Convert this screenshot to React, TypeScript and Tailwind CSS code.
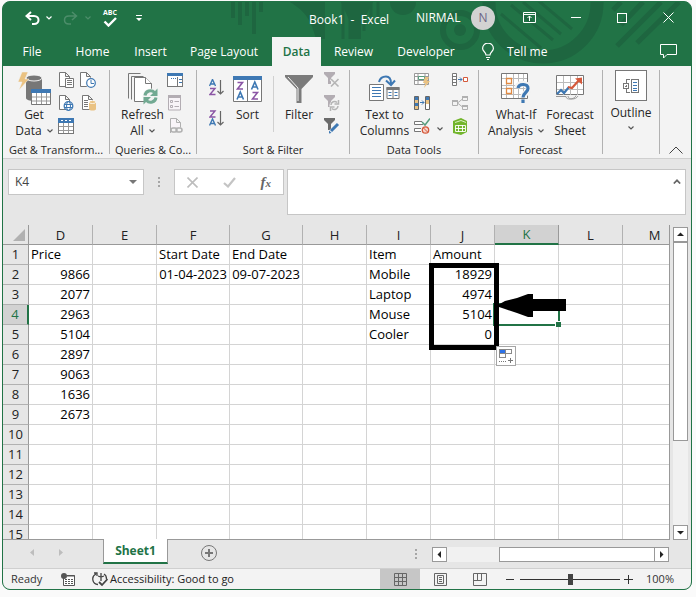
import React from "react";

type Row = Record<string, string>;

const columns = [
  { name: "D", width: "w-[64px]" },
  { name: "E", width: "w-[64px]" },
  { name: "F", width: "w-[73px]" },
  { name: "G", width: "w-[73px]" },
  { name: "H", width: "w-[64px]" },
  { name: "I", width: "w-[64px]" },
  { name: "J", width: "w-[64px]" },
  { name: "K", width: "w-[64px]" },
  { name: "L", width: "w-[64px]" },
  { name: "M", width: "w-auto" },
];

const rows: Row[] = [
  { D: "Price", F: "Start Date", G: "End Date", I: "Item", J: "Amount" },
  { D: "9866", F: "01-04-2023", G: "09-07-2023", I: "Mobile", J: "18929" },
  { D: "2077", I: "Laptop", J: "4974" },
  { D: "2963", I: "Mouse", J: "5104" },
  { D: "5104", I: "Cooler", J: "0" },
  { D: "2897" },
  { D: "9063" },
  { D: "1636" },
  { D: "2673" },
  {},
  {},
  {},
  {},
  {},
  {},
];

const tabs = [
  { name: "File", width: "w-[56px]" },
  { name: "Home", width: "w-[65px]" },
  { name: "Insert", width: "w-[51px]" },
  { name: "Page Layout", width: "w-[96px]" },
  { name: "Data", width: "w-[49px]" },
  { name: "Review", width: "w-[65px]" },
  { name: "Developer", width: "w-[80px]" },
];

const Chevron = ({ className = "" }: { className?: string }) => (
  <svg width="6" height="4" viewBox="0 0 6 4" fill="none" stroke="currentColor" className={className}>
    <path d="M.5 .5 3 3 5.5 .5" strokeWidth="1.2" />
  </svg>
);

const Dots = () => (
  <svg width="2" height="10" viewBox="0 0 2 10" fill="#a6a6a6" shapeRendering="crispEdges">
    <path d="M0 0h2v2H0zM0 4h2v2H0zM0 8h2v2H0z" />
  </svg>
);

/* Ribbon icons */

const GetDataIcon = () => (
  <svg width="34" height="34" viewBox="0 0 34 34">
    <path d="M9 6v20c0 2 4 3 8 3s8-1 8-3V6z" fill="#777" />
    <ellipse cx="17" cy="6" rx="8" ry="3" fill="#777" stroke="#f3f3f3" />
    <path d="M5 0h6L8 7h4L2 18l3-8H1z" fill="#eac282" stroke="#f3f3f3" strokeWidth=".5" />
    <path d="M14.500 17.500h19v15h-19z" fill="#fff" stroke="#777" />
    <path d="M14 17h20v4H14z" fill="#3e78b3" />
    <path d="M15 25h18M15 29h18M19.500 21v11M24.500 21v11M29.500 21v11" stroke="#999" fill="none" />
  </svg>
);

const Page = () => <path d="M.5 .5h6l4 4v10H.5z M6.500 .5v4h4" fill="#fff" stroke="#777" />;

const TextFileIcon = () => (
  <svg width="16" height="16" viewBox="0 0 16 16">
    <g transform="translate(1 0)"><Page /></g>
    <path d="M7.500 6.500h8v9h-8z" fill="#fff" stroke="#777" />
    <path d="M9 8.500h5M9 10.500h5M9 12.500h5" stroke="#777" />
  </svg>
);

const RecentIcon = () => (
  <svg width="16" height="16" viewBox="0 0 16 16">
    <Page />
    <circle cx="11" cy="11" r="5.500" fill="#f3f3f3" />
    <circle cx="11" cy="11" r="4.300" fill="#fff" stroke="#3e78b3" strokeWidth="1.200" />
    <path d="M11 8v3.500h3" fill="none" stroke="#3e78b3" />
  </svg>
);

const WebIcon = () => (
  <svg width="16" height="16" viewBox="0 0 16 16">
    <g transform="translate(1 0)"><Page /></g>
    <circle cx="10.500" cy="11" r="4.300" fill="#fff" stroke="#3e78b3" strokeWidth="1.300" />
    <ellipse cx="10.500" cy="11" rx="2" ry="4.500" fill="none" stroke="#3e78b3" />
    <path d="M6 9.500h9M6 12.500h9" stroke="#3e78b3" />
  </svg>
);

const ConnectionsIcon = () => (
  <svg width="16" height="16" viewBox="0 0 16 16">
    <g transform="translate(2 0)"><Page /></g>
    <path d="M4 5.500h4M4 7.500h4M4 9.500h4M4 11.500h4" stroke="#777" />
    <path d="M9 7v7c0 2 7 2 7 0V7z" fill="#eac282" />
    <ellipse cx="12.500" cy="7" rx="3.500" ry="1.500" fill="#eac282" stroke="#fff" strokeWidth=".8" />
  </svg>
);

const TableIcon = () => (
  <svg width="16" height="16" viewBox="0 0 16 16" shapeRendering="crispEdges">
    <path d="M.5 .5h15v15H.5z" fill="#fff" stroke="#777" />
    <path d="M0 0h16v5H0z" fill="#3e78b3" />
    <path d="M3 2h2v1H3zM7 2h2v1H7zM11 2h2v1h-2z" fill="#fff" />
    <path d="M1 8.500h14M1 12.500h14M5.500 5v10M10.500 5v10" stroke="#999" />
  </svg>
);

const RefreshIcon = () => (
  <svg width="30" height="32" viewBox="0 0 30 32">
    <g fill="#fff" stroke="#777">
      <path d="M.5 25.500V.5h12" fill="none" />
      <path d="M3.500 26.500v-23h12" fill="none" />
      <path d="M6.500 28.500v-24h11l6 6v18z" />
      <path d="M17.500 4.500v6h6" />
    </g>
    <circle cx="22.500" cy="23.500" r="8" fill="#f3f3f3" />
    <path d="M17 22.500a5.500 5.500 0 0 1 9.500-3M28 24.500a5.500 5.500 0 0 1-9.500 3" fill="none" stroke="#72a992" strokeWidth="3" />
    <path d="M29.500 15.500v7.500H22zM15.500 31.500V24H23z" fill="#72a992" />
  </svg>
);

const QueriesIcon = () => (
  <svg width="16" height="15" viewBox="0 0 16 15" shapeRendering="crispEdges">
    <path d="M.5 .5h15v13H.5z" fill="#fff" stroke="#777" />
    <path d="M0 0h16v3H0z" fill="#3e78b3" />
    <path d="M10.500 4v9" stroke="#777" />
    <path d="M12 6.500h3M12 9.500h3M4 5.500h1m1 0h1m1 0h1" stroke="#3e78b3" />
  </svg>
);

const PropertiesIcon = () => (
  <svg width="16" height="16" viewBox="0 0 16 16">
    <path d="M1.500 1h12v14h-12z" fill="#f8f4f8" stroke="#b3adb3" />
    <path d="M1 0h13v3H1z" fill="#b3adb3" />
    <path d="M3.500 5.500h2v2h-2zM3.500 10.500h2v2h-2zM7.500 6.500H12M7.500 11.500H12" fill="none" stroke="#b3adb3" />
  </svg>
);

const EditLinksIcon = () => (
  <svg width="16" height="16" viewBox="0 0 16 16" fill="none" stroke="#b0b0b0">
    <path d="M3.500 15V.5h6l4 4v5M9.500 .5v4h4" fill="#f8f4f8" />
    <rect x="4" y="10" width="6" height="4" rx="2" strokeWidth="1.500" fill="#f3f3f3" />
    <rect x="9" y="10" width="6" height="4" rx="2" strokeWidth="1.500" />
  </svg>
);

const SortOrderIcon = ({ descending = false }: { descending?: boolean }) => {
  const a = <path d={descending ? "M.5 15.500 3.500 9l3 6.500M1.600 13.500h4" : "M.5 7 3.500 .5l3 6.500M1.600 5h4"} stroke="#3e78b3" />;
  const z = <path d={descending ? "M1 1h5L1 7h5.500" : "M1 9.500h5l-5 6h5.500"} stroke="#8b55a5" />;
  return (
    <svg width="15" height="17" viewBox="0 0 15 17" fill="none" strokeWidth="1.400">
      {a}
      {z}
      <path d="M11.500 1v14M8.500 12l3 3 3-3" stroke="#666" strokeWidth="1.200" />
    </svg>
  );
};

const SortIcon = () => (
  <svg width="29" height="26" viewBox="0 0 29 26" fill="none" strokeWidth="1.600">
    <path d="M.5 1.500h28v24H.5z" fill="#fff" stroke="#777" strokeWidth="1" />
    <path d="M0 0h29v4H0z" fill="#3e78b3" />
    <path d="M14.500 4v21" stroke="#777" strokeWidth="1" />
    <path d="M4.500 6.500h5l-5 6.500h5.500M19.500 16.500h5l-5 6.500H25" stroke="#8b55a5" />
    <path d="M4 23.500 7.300 16l3.200 7.500M5 21h4.500M18.500 13.500 21.800 6l3.200 7.500M19.500 11H24" stroke="#3e78b3" />
  </svg>
);

const FilterIcon = () => (
  <svg width="28" height="28" viewBox="0 0 28 28">
    <path d="M0 0h28v2L16.500 14v14h-5V14L0 2z" fill="#7b7b7b" />
    <path d="M3 2l10 11v13" fill="none" stroke="#f3f3f3" />
  </svg>
);

const SmallFilter = ({ color }: { color: string }) => <path d="M0 0h11v2L7 6v6H4V6L0 2z" fill={color} />;

const ClearIcon = () => (
  <svg width="16" height="16" viewBox="0 0 16 16">
    <SmallFilter color="#b3adb3" />
    <path d="m7 7 7 7M14 7l-7 7" stroke="#f3f3f3" strokeWidth="3.500" />
    <path d="m7 7 7.500 7.500M14.500 7 7 14.500" stroke="#b5b5b5" strokeWidth="1.600" />
  </svg>
);

const ReapplyIcon = () => (
  <svg width="16" height="16" viewBox="0 0 16 16">
    <SmallFilter color="#b3adb3" />
    <circle cx="10.500" cy="10.500" r="5" fill="#f3f3f3" />
    <path d="M7 10a3.500 3.500 0 0 1 6-2.500M14 11a3.500 3.500 0 0 1-6 2.500M14.500 5v4h-4M6.500 16v-4h4" fill="none" stroke="#b5b5b5" strokeWidth="1.500" />
  </svg>
);

const AdvancedIcon = () => (
  <svg width="16" height="16" viewBox="0 0 16 16">
    <SmallFilter color="#6b6b6b" />
    <path d="m6.500 14 7-7" stroke="#f3f3f3" strokeWidth="4.500" />
    <path d="m7 13 7-7" stroke="#3e78b3" strokeWidth="3" />
    <path d="M5 15.500v-3l2.500 2.500z" fill="#3e78b3" />
  </svg>
);

const TextToColumnsIcon = () => (
  <svg width="31" height="27" viewBox="0 0 31 27">
    <path d="M.5 9.500h14v16H.5z" fill="#fff" stroke="#777" />
    <path d="M3 12.500h9M3 15.500h9M3 18.500h9M3 21.500h9" stroke="#3e78b3" />
    <path d="M18 12.500h12v11H18z" fill="#fff" stroke="#777" />
    <path d="M17.500 12H30.500v3h-13z" fill="#777" />
    <path d="M24 15v9" stroke="#777" />
    <path d="M19.500 17.500h3M25.500 17.500h3M19.500 20.500h3M25.500 20.500h3" stroke="#3e78b3" />
    <path d="M10 7c1-4 4-5.500 7-5.500s5 2 5 7M17 5.500l5 4.500 4-4.500" fill="none" stroke="#3e78b3" strokeWidth="2" />
  </svg>
);

const FlashFillIcon = () => (
  <svg width="16" height="16" viewBox="0 0 16 16">
    <path d="M.5 1.500h14v11H.5zM1 4.500h13M1 8.500h13M4 2v10M11 2v10" fill="#fff" stroke="#999" />
    <path d="M4.500 4.500h6v3h-6z" fill="#fff" stroke="#579c7c" />
    <path d="M11 5h4l-2 4h3l-6 7 1.500-5H9z" fill="#eac282" />
  </svg>
);

const DuplicatesIcon = () => (
  <svg width="16" height="16" viewBox="0 0 16 16">
    <path d="M.5 1.500h4v13h-4z" fill="#3e78b3" stroke="#666" />
    <path d="M1 5h3v3H1zM1 11h3v3H1z" fill="#eac282" />
    <path d="M11.500 1.500h4v13h-4z" fill="#fff" stroke="#666" />
    <path d="M12 2h3v3h-3z" fill="#3e78b3" />
    <path d="M12 5h3v4h-3z" fill="#eac282" />
    <path d="M6 7.500h4M8 5.500l2 2-2 2" fill="none" stroke="#3e78b3" />
  </svg>
);

const ValidationIcon = () => (
  <svg width="16" height="16" viewBox="0 0 16 16" fill="none">
    <path d="M8 3.500H.5v3H9M7 10.500H.5v3H7" stroke="#777" fill="#fff" />
    <path d="m8 4 3 3 5-6.500" stroke="#579c7c" strokeWidth="1.500" />
    <circle cx="11.500" cy="12" r="3.200" stroke="#d4593b" strokeWidth="1.300" fill="#f6d5cd" />
    <path d="m9.500 10 4 4" stroke="#d4593b" />
  </svg>
);

const ConsolidateIcon = () => (
  <svg width="16" height="14" viewBox="0 0 16 14" fill="none">
    <path d="M.5 .5h4v12h-4zM.5 3.500h4M.5 6.500h4M.5 9.500h4" fill="#fff" stroke="#777" />
    <path d="M6 6.500h4M8 4.500l2 2-2 2" stroke="#3e78b3" />
    <path d="M11.500 4.500h4v4h-4z" fill="#fff" stroke="#d4593b" />
  </svg>
);

const RelationshipsIcon = () => (
  <svg width="16" height="16" viewBox="0 0 16 16" fill="none" stroke="#b0b0b0">
    <path d="M.5 5.500h5v5h-5zM10.500 1.500h5v4h-5zM10.500 10.500h5v4h-5zM5.500 8l5-4M5.500 8l5 4" />
    <path d="M0 6h6M10 2h6M10 11h6" strokeWidth="2" />
  </svg>
);

const DataModelIcon = () => (
  <svg width="17" height="17" viewBox="0 0 17 17" fill="none">
    <path d="M1 3 9 0l6 3v11l-6 3-8-2z" fill="#72b52c" />
    <path d="M3.500 7.500h10v6h-10zM3 10.500h10M6.500 7v7M10.500 7v7" stroke="#fff" strokeWidth=".9" />
    <path d="M3 4.500 9 2.500l5 2" stroke="#d9efbf" />
  </svg>
);

const WhatIfIcon = () => (
  <svg width="30" height="31" viewBox="0 0 30 31" fill="none">
    <path d="M.5 .5h26v25H.5z" fill="#fff" stroke="#777" />
    <path d="M1 5.500h25M1 12.500h25M1 15.500h25M1 21.500h25M5.500 1v24M12.500 1v24M17.500 1v24M22.500 1v24" stroke="#bbb" />
    <path d="M5.500 5.500h5v5h-5zM5.500 15.500h5v5h-5z" fill="#fff" stroke="#e08a43" strokeWidth="1.300" />
    <path d="M16 15c1-6 12-6 11.500 1 0 4-5.500 4-5.500 9" stroke="#f3f3f3" strokeWidth="6" />
    <path d="M17 15c1-5 10.500-4.500 10 .5 0 4-5 4-5 9M22 26.500V30" stroke="#3e78b3" strokeWidth="3.200" />
  </svg>
);

const ForecastIcon = () => (
  <svg width="29" height="27" viewBox="0 0 29 27" fill="none">
    <path d="M.5 .5h27v19H.5z" fill="#fff" stroke="#777" />
    <path d="M1 7.500h26M1 14.500h26M7.500 1v19M14.500 1v19M21.500 1v19" stroke="#bbb" />
    <path d="M0 21.500h10c0 4 9 3 10-1M12 21c0 4 8 4 10 0" stroke="#999" />
    <path d="m1 19 4-4 3 3 5-6" stroke="#3e78b3" strokeWidth="2.200" />
    <path d="m12 12 4 1 8-9" stroke="#d4593b" strokeWidth="2.200" />
    <path d="M26 2.500v7l-7-6z" fill="#d4593b" />
  </svg>
);

const OutlineIcon = () => (
  <svg width="16" height="14" viewBox="0 0 16 14" fill="none" stroke="#777" shapeRendering="crispEdges">
    <path d="M6.500 .5h-3v3M3.500 10v3h3M.5 4.500h5v5H.5zM2 7h2M3 6v2" />
    <path d="M8.500 .5h7v13h-7z" fill="#fff" />
    <path d="M10 3.500h4M10 6.500h4M10 9.500h4M10 11.500h4" stroke="#3e78b3" />
  </svg>
);

interface GroupProps {
  label: string;
  width: string;
  children: React.ReactNode;
}

const Group: React.FC<GroupProps> = ({ label, width, children }) => {
  return (
    <div className={`${width} flex shrink-0 flex-col justify-between border-r border-[#b1b1b1]`}>
      <div className="flex">{children}</div>
      <div className="whitespace-nowrap text-center text-[11px] leading-[8px]">{label}</div>
    </div>
  );
};

interface BigButtonProps {
  icon: React.ReactNode;
  lines: string[];
  width: string;
  menu?: boolean;
}

const BigButton: React.FC<BigButtonProps> = ({ icon, lines, width, menu }) => {
  return (
    <button className={`${width} flex shrink-0 flex-col items-center self-start leading-4`}>
      <span className="flex h-[37px] items-center justify-center">{icon}</span>
      {lines.map((line, index) => (
        <span key={line} className="flex items-center gap-[5px] whitespace-nowrap">
          {line}
          {menu && index === lines.length - 1 && <Chevron className="text-[#555]" />}
        </span>
      ))}
    </button>
  );
};

const IconColumn = ({ items }: { items: [string, React.ReactNode][] }) => (
  <div className="flex w-[22px] shrink-0 flex-col gap-[7px] pt-[2px]">
    {items.map(([label, icon]) => (
      <button key={label} aria-label={label} className="h-4">
        {icon}
      </button>
    ))}
  </div>
);

const TitleBar = () => (
  <div className="relative flex h-[35px] items-center pb-[4px] text-white">
    <div className="flex w-[306px] items-center pl-[22px]">
      <button aria-label="Undo">
        <svg width="15" height="14" viewBox="0 0 15 14" fill="none" stroke="currentColor" strokeWidth="2">
          <path d="M6 1 1.500 5 6 9M2 5h7c6 0 6 8 0 8H7" />
        </svg>
      </button>
      <button aria-label="Undo list" className="ml-[6px]"><Chevron /></button>
      <button aria-label="Redo" className="ml-[11px] text-[#4c8d6a]">
        <svg width="15" height="14" viewBox="0 0 15 14" fill="none" stroke="currentColor" strokeWidth="1.500">
          <path d="m9 1 4.500 4L9 9M13 5H6C0 5 0 13 6 13h2" />
        </svg>
      </button>
      <button aria-label="Redo list" className="ml-[7px] text-[#4c8d6a]"><Chevron /></button>
      <button aria-label="Spelling" className="ml-[12px] flex w-[14px] flex-col items-center text-[7px] font-bold leading-[8px]">
        ABC
        <svg width="14" height="10" viewBox="0 0 14 10" fill="none" stroke="currentColor" strokeWidth="2.400">
          <path d="m1.500 4.500 4 4L13 1" />
        </svg>
      </button>
      <button aria-label="Customize toolbar" className="ml-[19px]">
        <svg width="6" height="6" viewBox="0 0 6 6" fill="currentColor">
          <path d="M0 0h6v1H0zM0 3h6L3 6z" />
        </svg>
      </button>
    </div>
    <div className="w-[107px] pt-[4px]">Book1&nbsp; -&nbsp; Excel</div>
    <div>NIRMAL</div>
    <div className="ml-auto flex items-center pr-[17px]">
      <span className="flex size-6 items-center justify-center rounded-full bg-[#d2d2d2] text-[#6d6585]">N</span>
      <button aria-label="Ribbon display options" className="ml-[28px]">
        <svg width="13" height="11" viewBox="0 0 13 11" fill="none" stroke="currentColor">
          <path d="M.5 .5h12v10H.5zM1 2.500h11M6.500 9V4M4.500 6l2-2 2 2" />
        </svg>
      </button>
      <button aria-label="Minimize" className="ml-[35px] h-px w-[10px] bg-white" />
      <button aria-label="Maximize" className="ml-[36px] size-[10px] border border-white" />
      <button aria-label="Close" className="ml-[36px]">
        <svg width="11" height="11" viewBox="0 0 11 11" stroke="currentColor">
          <path d="m.5 .5 10 10M10.500 .5l-10 10" />
        </svg>
      </button>
    </div>
  </div>
);

const TabBar = () => (
  <div className="relative flex h-[29px] items-center pl-px text-white">
    {tabs.map((tab) => (
      <button
        key={tab.name}
        className={`${tab.width} flex h-full shrink-0 items-center justify-center whitespace-nowrap ${
          tab.name === "Data" ? "bg-[#f3f3f3] font-semibold text-[#217346]" : ""
        }`}
      >
        {tab.name}
      </button>
    ))}
    <button className="ml-[16px] flex items-center gap-[13px] whitespace-nowrap">
      <svg width="12" height="17" viewBox="0 0 12 17" fill="none" stroke="currentColor" strokeWidth="1.200">
        <path d="M4 12c0-3-3.400-3.500-3.400-6.500a5.400 5.400 0 0 1 10.800 0C11.400 8.500 8 9 8 12zM4 14.500h4M5 16.500h2" />
      </svg>
      Tell me
    </button>
    <button aria-label="Comments" className="ml-auto mr-[14px]">
      <svg width="17" height="15" viewBox="0 0 17 15" fill="none" stroke="currentColor">
        <path d="M.5 .5h16v10H7l-3.500 3.500v-3.500h-3z" />
      </svg>
    </button>
  </div>
);

const Ribbon = () => (
  <div className="flex h-[93px] border-b border-[#cfcfcf] bg-[#f3f3f3] pb-[4px] pt-[4px] text-[#262626]">
    <Group label="Get & Transform..." width="w-[107px]">
      <BigButton icon={<GetDataIcon />} lines={["Get", "Data"]} width="w-[55px] pl-[7px]" menu />
      <IconColumn items={[["From Text", <TextFileIcon />], ["From Web", <WebIcon />], ["From Table", <TableIcon />]]} />
      <IconColumn items={[["Recent Sources", <RecentIcon />], ["Existing Connections", <ConnectionsIcon />]]} />
    </Group>
    <Group label="Queries & Co..." width="w-[87px]">
      <BigButton icon={<RefreshIcon />} lines={["Refresh", "All"]} width="w-[57px] pl-[8px]" menu />
      <IconColumn items={[["Queries", <QueriesIcon />], ["Properties", <PropertiesIcon />], ["Edit Links", <EditLinksIcon />]]} />
    </Group>
    <Group label="Sort & Filter" width="w-[153px]">
      <div className="ml-[12px] flex w-[19px] shrink-0 flex-col gap-[14px] pt-[9px]">
        <button aria-label="Sort A to Z"><SortOrderIcon /></button>
        <button aria-label="Sort Z to A"><SortOrderIcon descending /></button>
      </div>
      <BigButton icon={<SortIcon />} lines={["Sort"]} width="w-[39px]" />
      <div className="ml-[6px] mt-[6px] h-[56px] w-px shrink-0 bg-[#d0d0d0]" />
      <BigButton icon={<FilterIcon />} lines={["Filter"]} width="w-[50px]" />
      <IconColumn items={[["Clear", <ClearIcon />], ["Reapply", <ReapplyIcon />], ["Advanced", <AdvancedIcon />]]} />
    </Group>
    <Group label="Data Tools" width="w-[129px]">
      <BigButton icon={<TextToColumnsIcon />} lines={["Text to", "Columns"]} width="w-[64px] pl-[5px]" />
      <IconColumn items={[["Flash Fill", <FlashFillIcon />], ["Remove Duplicates", <DuplicatesIcon />], ["Data Validation", <ValidationIcon />]]} />
      <button aria-label="Data Validation options" className="mb-[8px] w-4 shrink-0 self-end">
        <Chevron className="ml-[1px] text-[#555]" />
      </button>
      <IconColumn items={[["Consolidate", <ConsolidateIcon />], ["Relationships", <RelationshipsIcon />], ["Data Model", <DataModelIcon />]]} />
    </Group>
    <Group label="Forecast" width="w-[124px]">
      <BigButton icon={<WhatIfIcon />} lines={["What-If", "Analysis"]} width="w-[62px] ml-[6px]" menu />
      <BigButton icon={<ForecastIcon />} lines={["Forecast", "Sheet"]} width="w-[46px]" />
    </Group>
    <div className="flex w-[57px] shrink-0 justify-center border-r border-[#b1b1b1]">
      <button className="flex flex-col items-center">
        <span className="flex h-[31px] w-8 items-center justify-center border border-[#777] bg-white"><OutlineIcon /></span>
        <span className="mt-[4px] leading-4">Outline</span>
        <Chevron className="mt-[5px] text-[#555]" />
      </button>
    </div>
    <button aria-label="Collapse the ribbon" className="ml-auto mr-[8px] self-end">
      <svg width="14" height="8" viewBox="0 0 14 8" fill="none" stroke="#444">
        <path d="m.5 7.500 6.500-6.500 6.500 6.500" />
      </svg>
    </button>
  </div>
);

const FormulaBar = () => (
  <div className="flex h-[66px] items-start bg-[#e6e6e6] pl-[5px] pr-[5px] pt-[10px]">
    <div className="flex h-[26px] w-[136px] shrink-0 items-center border border-[#c6c6c6] bg-white">
      <input aria-label="Name Box" defaultValue="K4" className="min-w-0 flex-1 pl-[6px] text-[#444] outline-none" />
      <button aria-label="Name list" className="pr-[6px]">
        <svg width="8" height="4" viewBox="0 0 8 4" fill="#777"><path d="M0 0h8L4 4z" /></svg>
      </button>
    </div>
    <div className="flex h-[26px] w-[30px] shrink-0 items-center justify-center"><Dots /></div>
    <div className="flex h-[26px] w-[110px] shrink-0 items-center justify-between border border-[#c6c6c6] bg-white pl-[12px] pr-[12px]">
      <button aria-label="Cancel">
        <svg width="11" height="11" viewBox="0 0 11 11" stroke="#bdbdbd" strokeWidth="1.600"><path d="m.5 .5 10 10M10.500 .5l-10 10" /></svg>
      </button>
      <button aria-label="Enter">
        <svg width="13" height="11" viewBox="0 0 13 11" fill="none" stroke="#c4c4c4" strokeWidth="2.200"><path d="m1 6 4 3.500L12 1" /></svg>
      </button>
      <button className="font-['Liberation_Serif',serif] text-[15px] font-bold italic leading-4 text-[#666]">
        f<span className="text-[11px]">x</span>
      </button>
    </div>
    <div className="ml-[3px] flex h-[46px] min-w-0 flex-1 items-start border border-[#c6c6c6] bg-white">
      <input aria-label="Formula Bar" className="min-w-0 flex-1 outline-none" />
      <button aria-label="Collapse formula bar" className="pr-[4px] pt-[9px]">
        <svg width="8" height="5" viewBox="0 0 8 5" fill="none" stroke="#666" strokeWidth="1.700"><path d="M.8 4.500 4 1.300l3.200 3.200" /></svg>
      </button>
    </div>
  </div>
);

const Highlight = () => (
  <span className="pointer-events-none absolute -left-[2px] -top-[2px] z-20 h-[87px] w-[70px] border-[5px] border-black">
    <svg width="70" height="24" viewBox="0 0 70 24" className="absolute left-[62px] top-[26px] max-w-none">
      <path d="M0 12 9 7l12-3 11-4h5v5h33v12H37v6h-5l-11-4-12-4z" />
    </svg>
    <svg width="20" height="20" viewBox="0 0 20 20" fill="none" className="absolute left-[62px] top-[78px] max-w-none" shapeRendering="crispEdges">
      <path d="M.5 .5h19v19H.5z" fill="#fff" stroke="#a5a5a5" />
      <path d="M3.500 3.500h6v4h-6zM9.500 3.500h6v4h-6zM3.500 7.500h6v4h-6z" stroke="#888" />
      <path d="M4 4h5v3H4z" fill="#2d72e8" />
      <path d="M3 15.500h1m1 0h1m1 0h1m1 0h1M12 14.500h5M14.500 12v5" stroke="#777" />
    </svg>
  </span>
);

const Selection = () => (
  <span className="pointer-events-none absolute -left-[2px] -top-[2px] z-10 h-[23px] w-[67px] border-2 border-[#217346]">
    <i className="absolute -bottom-[3px] -right-[3px] box-content size-[5px] border-l border-t border-white bg-[#217346]" />
  </span>
);

const Grid = () => {
  return (
    <div className="h-[315px] min-w-0 flex-1 overflow-hidden border-b border-r border-[#999]">
      <table className="w-full min-w-[684px] table-fixed border-separate border-spacing-0 bg-white text-[13px] leading-[19px] text-black">
        <thead className="leading-[18px]">
          <tr className="h-5 bg-[#e6e6e6] text-[#222]">
            <th aria-label="Select all" className="w-[26px] border-b border-r border-[#999] p-0">
              <svg width="12" height="12" viewBox="0 0 12 12" fill="#b1b1b1" className="ml-auto mr-[3px]"><path d="M12 0v12H0z" /></svg>
            </th>
            {columns.map((column) => (
              <th
                key={column.name}
                className={`${column.width} border-r p-0 font-normal ${
                  column.name === "K"
                    ? "border-b-2 border-b-[#217346] border-r-[#999] bg-[#d2d2d2] text-[#217346]"
                    : "border-b border-b-[#999] border-r-[#b1b1b1]"
                }`}
              >
                {column.name}
              </th>
            ))}
          </tr>
        </thead>
        <tbody>
          {rows.map((row, index) => (
            <tr key={index} className="h-5">
              <th
                className={`border-b border-b-[#b1b1b1] p-0 font-normal ${
                  index === 3
                    ? "border-r-2 border-r-[#217346] bg-[#d2d2d2] text-[#217346]"
                    : "border-r border-r-[#999] bg-[#e6e6e6] text-[#222]"
                }`}
              >
                {index + 1}
              </th>
              {columns.map((column) => (
                <td
                  key={column.name}
                  className={`relative whitespace-nowrap border-b border-r border-[#d4d4d4] px-[2px] py-0 ${
                    /^\d/.test(row[column.name] ?? "") ? "text-right" : "text-left"
                  }`}
                >
                  {row[column.name]}
                  {column.name === "J" && index === 1 && <Highlight />}
                  {column.name === "K" && index === 3 && <Selection />}
                </td>
              ))}
            </tr>
          ))}
        </tbody>
      </table>
    </div>
  );
};

interface ArrowProps {
  label: string;
  d: string;
}

const ScrollArrow: React.FC<ArrowProps> = ({ label, d }) => (
  <button aria-label={label} className="flex size-[15px] shrink-0 items-center justify-center border border-[#999] bg-white">
    <svg width="7" height="7" viewBox="0 0 7 7" fill="#222"><path d={d} /></svg>
  </button>
);

const SheetBar = () => (
  <div className="flex h-[28px] items-start bg-[#e6e6e6] pr-[22px]">
    <div className="flex h-[25px] w-[100px] shrink-0 items-center gap-[25px] pl-[27px]">
      <button aria-label="Previous sheet">
        <svg width="4" height="7" viewBox="0 0 4 7" fill="#bdbdbd"><path d="M4 0v7L0 3.500z" /></svg>
      </button>
      <button aria-label="Next sheet">
        <svg width="4" height="7" viewBox="0 0 4 7" fill="#bdbdbd"><path d="M0 0v7l4-3.500z" /></svg>
      </button>
    </div>
    <button className="relative -mt-px h-[25px] w-[65px] shrink-0 border-x border-b-2 border-x-[#999] border-b-[#217346] bg-white font-bold text-[#217346]">
      Sheet1
    </button>
    <button aria-label="New sheet" className="ml-[33px] mt-[5px]">
      <svg width="16" height="16" viewBox="0 0 16 16" fill="none" stroke="#777">
        <circle cx="8" cy="8" r="7.500" />
        <path d="M4 8h8M8 4v8" strokeWidth="2" />
      </svg>
    </button>
    <div className="ml-auto flex h-[15px] w-[254px] shrink-0 self-center">
      <span className="mr-[15px] flex items-center"><Dots /></span>
      <ScrollArrow label="Scroll left" d="M5 0v7L1.500 3.500z" />
      <span className="flex-1 bg-[#f1f1f1]" />
      <span className="w-[155px] border-y border-l border-[#999] bg-white" />
      <ScrollArrow label="Scroll right" d="M2 0v7l3.500-3.500z" />
    </div>
  </div>
);

const StatusBar = () => (
  <div className="flex h-[21px] items-center border-t border-[#cfcfcf] bg-[#f3f3f3] pl-[8px] pr-[17px] text-[11px] text-[#333]">
    <span className="w-[50px]">Ready</span>
    <button aria-label="Record macro" className="w-[31px]">
      <svg width="14" height="13" viewBox="0 0 14 13" fill="none" stroke="#555">
        <path d="M2.500 5v7.500h11v-10H6" fill="#fff" />
        <path d="M6 3h8M4 6.500h2m1 0h2m1 0h2M4 8.500h2m1 0h2m1 0h2M4 10.500h2m1 0h2m1 0h2" />
        <circle cx="3" cy="3" r="3" fill="#555" stroke="none" />
      </svg>
    </button>
    <button className="flex items-center gap-[2px] whitespace-nowrap text-[#222]">
      <svg width="16" height="15" viewBox="0 0 16 15" fill="none" stroke="#444" strokeWidth="1.300">
        <path d="M4 2a5.500 5.500 0 0 0 2 10.500M2 1h3v3M6 4l3 1 3-1M9 1v8M12 2c2 1 2.500 3 2.500 5" />
        <path d="m7 10 3 3 5.500-6" strokeWidth="1.800" />
      </svg>
      Accessibility: Good to go
    </button>
    <div className="ml-auto flex h-full items-center">
      <button aria-label="Normal view" className="flex h-full w-10 items-center justify-center bg-[#c6c6c6]">
        <svg width="13" height="13" viewBox="0 0 13 13" fill="none" stroke="#666"><path d="M.5 .5h12v12H.5zM.5 4.500h12M.5 8.500h12M4.500 .5v12M8.500 .5v12" /></svg>
      </button>
      <button aria-label="Page layout view" className="flex w-10 justify-center">
        <svg width="13" height="13" viewBox="0 0 13 13" fill="none" stroke="#666"><path d="M.5 .5h12v12H.5zM3.500 2.500h6v8h-6zM5 4.500h3M5 6.500h3M5 8.500h3" /></svg>
      </button>
      <button aria-label="Page break view" className="flex w-10 justify-center">
        <svg width="14" height="13" viewBox="0 0 14 13" fill="none" stroke="#666"><path d="M.5 .5h13v12H.5zM.5 7.500h8v-7M4.500 .5v7" /></svg>
      </button>
      <button aria-label="Zoom out" className="ml-[6px] h-px w-2 bg-[#333]" />
      <input
        type="range"
        aria-label="Zoom"
        className="ml-[6px] h-[11px] w-[100px] appearance-none bg-transparent [&::-webkit-slider-runnable-track]:h-px [&::-webkit-slider-runnable-track]:bg-[#333] [&::-webkit-slider-thumb]:-mt-[5px] [&::-webkit-slider-thumb]:h-[11px] [&::-webkit-slider-thumb]:w-[5px] [&::-webkit-slider-thumb]:appearance-none [&::-webkit-slider-thumb]:bg-[#444]"
      />
      <button aria-label="Zoom in" className="ml-[4px]">
        <svg width="9" height="9" viewBox="0 0 9 9" stroke="#333"><path d="M0 4.500h9M4.500 0v9" /></svg>
      </button>
      <span className="w-[41px] text-right">100%</span>
    </div>
  </div>
);

const App: React.FC = () => {
  return (
    <main className="min-h-screen bg-[#fafafa] pl-[2px] pr-[4px] pt-px font-['Open_Sans','Noto_Sans',sans-serif] text-[12px] leading-4">
      <div className="overflow-hidden rounded-lg border border-[#217346] bg-[#217346]">
        <header className="relative">
          <svg width="460" height="64" viewBox="0 0 460 64" fill="none" stroke="#1e6640" className="absolute right-0 top-0">
            <path d="M2 0v16M9 0v23M16 0v14M23 0v32M30 0v10" strokeWidth="4" />
            <path d="M59 0h35v37h-9C80 18 75 10 59 0zM110 0h32l-12 23v14h-10V22z" fill="#1e6640" stroke="none" />
            <path d="M112 0v37M119 0v37M126 0v35M133 0v29M140 0v22M147 0v15" strokeWidth="3" />
            <circle cx="172" cy="0" r="13" fill="#1e6640" stroke="none" />
            <circle cx="229" cy="28" r="17" strokeWidth="6" />
            <circle cx="229" cy="28" r="6" fill="#1e6640" stroke="none" />
            <circle cx="312" cy="1" r="54" strokeWidth="13" />
            <path d="m270 12 40 34M280 3l42 35M292 0l38 32M303-5l38 32" strokeWidth="3" />
            <path d="m386 44 44-44M406 41l42-41M382 8l8-8M390 23l22-23" strokeWidth="5" />
          </svg>
          <TitleBar />
          <TabBar />
        </header>
        <Ribbon />
        <FormulaBar />
        <div className="flex bg-[#e6e6e6]">
          <Grid />
          <div className="flex w-[21px] shrink-0 flex-col pl-[3px] pt-[2px]">
            <ScrollArrow label="Scroll up" d="M0 5h7L3.500 1.500z" />
            <span className="h-[199px] w-[15px] border border-[#999] bg-white" />
            <span className="w-[15px] flex-1 bg-[#f1f1f1]" />
            <ScrollArrow label="Scroll down" d="M0 2h7L3.500 5.500z" />
          </div>
        </div>
        <SheetBar />
        <StatusBar />
      </div>
    </main>
  );
};

export default App;
